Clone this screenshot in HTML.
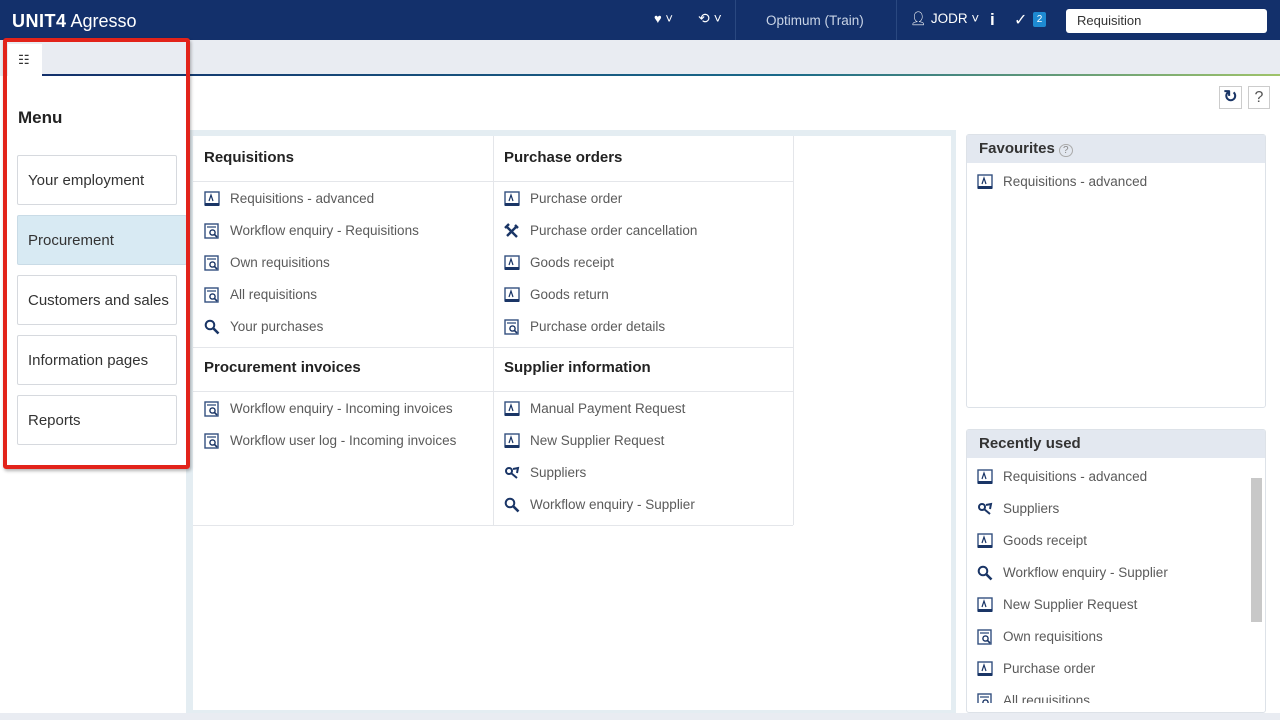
<!DOCTYPE html>
<html><head><meta charset="utf-8"><style>
*{box-sizing:border-box;margin:0;padding:0}
body{width:1280px;height:720px;overflow:hidden;background:#fff;font-family:"Liberation Sans",sans-serif;position:relative;color:#333}
.hdr{position:absolute;left:0;top:0;width:1280px;height:40px;background:#13306b;color:#fff}
.abs{position:absolute}
.tabbar{position:absolute;left:0;top:40px;width:1280px;height:36px;background:#e9ecf2}
.tab{position:absolute;left:8px;top:44px;width:34px;height:32px;background:#fff}
.gline{position:absolute;left:42px;top:74px;width:1238px;height:2px;background:linear-gradient(90deg,#13306b,#1a6a8a 60%,#9fc36a)}
.redbox{position:absolute;left:3px;top:38px;width:187px;height:431px;border:4px solid #e2231a;border-radius:3px;box-shadow:1px 2px 3px rgba(0,0,0,.3)}
.mbtn{position:absolute;left:17px;width:160px;height:50px;border:1px solid #d6d9de;border-radius:2px;background:#fff;font-size:15px;color:#333;padding-left:10px;line-height:50px}
.main{position:absolute;left:186px;top:130px;width:770px;height:584px;background:#e4edf2}
.inner{position:absolute;left:193px;top:136px;width:758px;height:574px;background:#fff}
.h{position:absolute;font-weight:bold;font-size:15px;color:#222}
.it{position:absolute;font-size:13.5px;color:#5a5a5a;height:20px;line-height:20px;white-space:nowrap}
.it svg{position:absolute;left:-26px;top:2px}
.ln{position:absolute;background:#e4e6ea}
.panel{position:absolute;left:966px;width:300px;border:1px solid #dde2e8;background:#fff;border-radius:3px}
.ph{height:28px;background:#e3e8f0;font-weight:bold;font-size:15px;color:#333;padding-left:12px;line-height:28px}
</style></head><body>
<svg width="0" height="0" style="position:absolute"><defs>
<symbol id="f" viewBox="0 0 16 16"><rect x="1" y="1" width="14" height="13" fill="#fff" stroke="#34507f" stroke-width="1.4"/><rect x="1" y="12" width="14" height="3" fill="#1a3566"/><path d="M5 10 L7 4 L9 10" fill="none" stroke="#1a3566" stroke-width="1.2"/></symbol>
<symbol id="w" viewBox="0 0 16 16"><rect x="1" y="1" width="13" height="14" fill="#fff" stroke="#34507f" stroke-width="1.4"/><line x1="3" y1="4" x2="12" y2="4" stroke="#34507f" stroke-width="1.3"/><circle cx="8.5" cy="9.5" r="2.6" fill="none" stroke="#1a3566" stroke-width="1.4"/><line x1="10.5" y1="11.5" x2="13" y2="14" stroke="#1a3566" stroke-width="1.6"/></symbol>
<symbol id="s" viewBox="0 0 16 16"><circle cx="6" cy="6" r="4.3" fill="none" stroke="#1a3566" stroke-width="2"/><line x1="9" y1="9" x2="14.5" y2="14.5" stroke="#1a3566" stroke-width="2.6"/></symbol>
<symbol id="t" viewBox="0 0 16 16"><path d="M2 3 L13 14 M3 13 L13 3 M11 2 L14 5 M1 5 L5 1" stroke="#1a3566" stroke-width="2.4" fill="none"/></symbol>
<symbol id="p" viewBox="0 0 16 16"><circle cx="5" cy="6" r="3" fill="none" stroke="#1a3566" stroke-width="2"/><path d="M7 8 L13 13 M9 4 L14 3 L13 8" stroke="#1a3566" stroke-width="2" fill="none"/></symbol>
</defs></svg>
<div class="hdr">
<div class="abs" style="left:12px;top:10px;font-size:18px;line-height:22px"><b style="font-weight:900;letter-spacing:.5px">UNIT4</b> Agresso</div>
<div class="abs" style="left:654px;top:11px;font-size:13px">♥ ˅</div>
<div class="abs" style="left:698px;top:10px;font-size:14px">⟲ ˅</div>
<div class="abs" style="left:735px;top:0;width:1px;height:40px;background:#2a4880"></div>
<div class="abs" style="left:766px;top:13px;font-size:13.5px;color:#c9d4e6">Optimum (Train)</div>
<div class="abs" style="left:896px;top:0;width:1px;height:40px;background:#2a4880"></div>
<div class="abs" style="left:910px;top:11px;font-size:13.5px">👤︎ JODR ˅</div>
<div class="abs" style="left:990px;top:10px;font-size:17px;font-weight:bold">i</div>
<div class="abs" style="left:1014px;top:10px;font-size:16px">✓</div>
<div class="abs" style="left:1033px;top:12px;width:13px;height:15px;background:#1e8ad2;font-size:10px;text-align:center;line-height:15px;border-radius:2px">2</div>
<div class="abs" style="left:1066px;top:9px;width:201px;height:24px;background:#fff;border-radius:3px;color:#333;font-size:13px;padding-left:11px;line-height:24px">Requisition</div>
</div>
<div class="tabbar"></div>
<div class="tab"><div class="abs" style="left:10px;top:9px;font-size:13px;color:#333;line-height:13px">☷</div></div>
<div class="gline"></div>
<div class="abs" style="left:1219px;top:86px;width:23px;height:23px;border:1px solid #ccc;font-size:17px;text-align:center;line-height:20px;color:#1a3566;font-weight:bold">↻</div>
<div class="abs" style="left:1248px;top:86px;width:22px;height:23px;border:1px solid #ccc;font-size:16px;text-align:center;line-height:21px;color:#555">?</div>

<div class="main"></div><div class="inner"></div>
<div class="ln" style="left:493px;top:136px;width:1px;height:389px"></div>
<div class="ln" style="left:793px;top:136px;width:1px;height:389px"></div>
<div class="ln" style="left:193px;top:181px;width:600px;height:1px"></div>
<div class="ln" style="left:193px;top:347px;width:600px;height:1px"></div>
<div class="ln" style="left:193px;top:391px;width:600px;height:1px"></div>
<div class="ln" style="left:193px;top:525px;width:600px;height:1px"></div>
<div class="h" style="left:204px;top:149px">Requisitions</div>
<div class="h" style="left:504px;top:149px">Purchase orders</div>
<div class="h" style="left:204px;top:359px">Procurement invoices</div>
<div class="h" style="left:504px;top:359px">Supplier information</div>
<div class="it" style="left:230px;top:189px"><svg width="16" height="16"><use href="#f"/></svg>Requisitions - advanced</div>
<div class="it" style="left:230px;top:221px"><svg width="16" height="16"><use href="#w"/></svg>Workflow enquiry - Requisitions</div>
<div class="it" style="left:230px;top:253px"><svg width="16" height="16"><use href="#w"/></svg>Own requisitions</div>
<div class="it" style="left:230px;top:285px"><svg width="16" height="16"><use href="#w"/></svg>All requisitions</div>
<div class="it" style="left:230px;top:317px"><svg width="16" height="16"><use href="#s"/></svg>Your purchases</div>
<div class="it" style="left:230px;top:399px"><svg width="16" height="16"><use href="#w"/></svg>Workflow enquiry - Incoming invoices</div>
<div class="it" style="left:230px;top:431px"><svg width="16" height="16"><use href="#w"/></svg>Workflow user log - Incoming invoices</div>
<div class="it" style="left:530px;top:189px"><svg width="16" height="16"><use href="#f"/></svg>Purchase order</div>
<div class="it" style="left:530px;top:221px"><svg width="16" height="16"><use href="#t"/></svg>Purchase order cancellation</div>
<div class="it" style="left:530px;top:253px"><svg width="16" height="16"><use href="#f"/></svg>Goods receipt</div>
<div class="it" style="left:530px;top:285px"><svg width="16" height="16"><use href="#f"/></svg>Goods return</div>
<div class="it" style="left:530px;top:317px"><svg width="16" height="16"><use href="#w"/></svg>Purchase order details</div>
<div class="it" style="left:530px;top:399px"><svg width="16" height="16"><use href="#f"/></svg>Manual Payment Request</div>
<div class="it" style="left:530px;top:431px"><svg width="16" height="16"><use href="#f"/></svg>New Supplier Request</div>
<div class="it" style="left:530px;top:463px"><svg width="16" height="16"><use href="#p"/></svg>Suppliers</div>
<div class="it" style="left:530px;top:495px"><svg width="16" height="16"><use href="#s"/></svg>Workflow enquiry - Supplier</div>

<div class="panel" style="top:134px;height:274px"><div class="ph">Favourites <span style="font-weight:normal;font-size:10px;border:1px solid #aaa;border-radius:50%;padding:0 3px;color:#888">?</span></div></div>
<div class="it" style="left:1003px;top:172px"><svg width="16" height="16"><use href="#f"/></svg>Requisitions - advanced</div>
<div class="panel" style="top:429px;height:284px;overflow:hidden"><div class="ph">Recently used</div>
<div class="abs" style="left:284px;top:48px;width:11px;height:144px;background:#c8c8c8"></div></div>
<div class="it" style="left:1003px;top:467px"><svg width="16" height="16"><use href="#f"/></svg>Requisitions - advanced</div>
<div class="it" style="left:1003px;top:499px"><svg width="16" height="16"><use href="#p"/></svg>Suppliers</div>
<div class="it" style="left:1003px;top:531px"><svg width="16" height="16"><use href="#f"/></svg>Goods receipt</div>
<div class="it" style="left:1003px;top:563px"><svg width="16" height="16"><use href="#s"/></svg>Workflow enquiry - Supplier</div>
<div class="it" style="left:1003px;top:595px"><svg width="16" height="16"><use href="#f"/></svg>New Supplier Request</div>
<div class="it" style="left:1003px;top:627px"><svg width="16" height="16"><use href="#w"/></svg>Own requisitions</div>
<div class="it" style="left:1003px;top:659px"><svg width="16" height="16"><use href="#f"/></svg>Purchase order</div>
<div class="abs" style="left:977px;top:691px;width:200px;height:12px;overflow:hidden"><div class="it" style="left:26px;top:0"><svg width="16" height="16"><use href="#w"/></svg>All requisitions</div></div>
<div class="abs" style="left:0;top:713px;width:1280px;height:7px;background:#e9ecf2"></div>

<div class="abs" style="left:18px;top:108px;font-size:17px;font-weight:bold;color:#222">Menu</div>
<div class="mbtn" style="top:155px">Your employment</div>
<div class="mbtn" style="top:215px;background:#d8eaf3;border-color:#c9dbe6;width:170px">Procurement</div>
<div class="mbtn" style="top:275px">Customers and sales</div>
<div class="mbtn" style="top:335px">Information pages</div>
<div class="mbtn" style="top:395px">Reports</div>
<div class="redbox"></div>
</body></html>
